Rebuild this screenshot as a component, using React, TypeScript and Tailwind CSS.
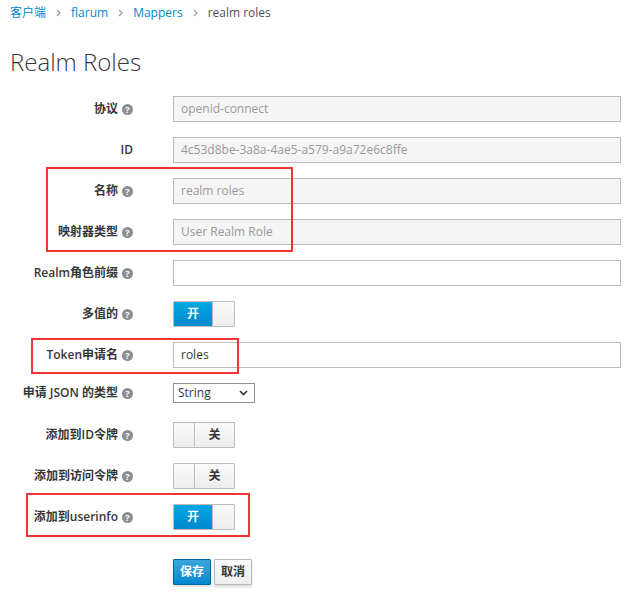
import React from "react";

const FONT = { fontFamily: '"Open Sans", "Noto Sans CJK SC", sans-serif' };

function Help() {
  return (
    <span className="inline-flex h-[11px] w-[11px] items-center justify-center rounded-full bg-[#8b8d8f] text-[9px] font-bold leading-none text-white">
      ?
    </span>
  );
}

function Chevron() {
  return (
    <svg width="5" height="8" viewBox="0 0 5 8" className="mx-[10px]">
      <path d="M1 1l3 3-3 3" fill="none" stroke="#9c9c9c" strokeWidth="1.2" />
    </svg>
  );
}

function Row({
  label,
  children,
  h = "h-[26px]",
  mb = "mb-[15px]",
}: {
  label: string;
  children: React.ReactNode;
  h?: string;
  mb?: string;
}) {
  return (
    <div className={`flex items-center ${h} ${mb}`}>
      <div className="flex w-[133px] items-center justify-end gap-[4px] text-[12px] font-semibold text-[#363636]">
        <span className="whitespace-nowrap">{label}</span>
        {label !== "ID" && <Help />}
      </div>
      <div className="ml-[40px] flex items-center">{children}</div>
    </div>
  );
}

function Input({ value, disabled }: { value: string; disabled?: boolean }) {
  return (
    <div
      className={`flex h-[26px] w-[448px] items-center border border-[#bbbbbb] pl-[7px] text-[12px] ${
        disabled ? "bg-[#f5f5f5] text-[#999999]" : "bg-white text-[#363636]"
      }`}
    >
      {value}
    </div>
  );
}

function ToggleOn() {
  return (
    <div className="flex h-[26px] w-[62px] overflow-hidden rounded-[1px] border border-[#bbbbbb]">
      <div className="flex w-[38px] items-center justify-center bg-linear-to-b from-[#00a8e1] to-[#0088ce] text-[12px] font-bold text-white">
        开
      </div>
      <div className="flex-1 border-l border-[#bbbbbb] bg-linear-to-b from-[#fafafa] to-[#ededed]" />
    </div>
  );
}

function ToggleOff() {
  return (
    <div className="flex h-[26px] w-[62px] overflow-hidden rounded-[1px] border border-[#bbbbbb]">
      <div className="w-[21px] border-r border-[#bbbbbb] bg-linear-to-b from-[#fafafa] to-[#ededed]" />
      <div className="flex flex-1 items-center justify-center bg-linear-to-b from-[#fafafa] to-[#ededed] text-[12px] font-bold text-[#363636]">
        关
      </div>
    </div>
  );
}

export default function App() {
  return (
    <div
      className="relative h-[598px] w-[632px] overflow-hidden bg-white text-[12px] text-[#363636]"
      style={FONT}
    >
      {/* breadcrumb */}
      <div className="flex h-[17px] items-center pl-[10px] pt-[4px] text-[12px] leading-[17px] box-content">
        <span className="text-[#0088ce]">客户端</span>
        <Chevron />
        <span className="text-[#0088ce]">flarum</span>
        <Chevron />
        <span className="text-[#0088ce]">Mappers</span>
        <Chevron />
        <span className="text-[#4d5258]">realm roles</span>
      </div>

      <h1 className="ml-[10px] mt-[28px] h-[26px] text-[24px] font-light leading-[26px] text-[#363636]">
        Realm Roles
      </h1>

      <div className="mt-[21px]">
        <Row label="协议">
          <Input value="openid-connect" disabled />
        </Row>
        <Row label="ID">
          <Input value="4c53d8be-3a8a-4ae5-a579-a9a72e6c8ffe" disabled />
        </Row>
        <Row label="名称">
          <Input value="realm roles" disabled />
        </Row>
        <Row label="映射器类型">
          <Input value="User Realm Role" disabled />
        </Row>
        <Row label="Realm角色前缀">
          <Input value="" />
        </Row>
        <Row label="多值的">
          <ToggleOn />
        </Row>
        <Row label="Token申请名">
          <Input value="roles" />
        </Row>
        <Row label="申请 JSON 的类型" h="h-[20px]" mb="mb-[19px]">
          <div className="flex h-[20px] w-[82px] items-center justify-between border border-[#8b8d8f] bg-white pl-[4px] pr-[6px] text-[12px] text-[#363636]">
            <span>String</span>
            <svg width="9" height="6" viewBox="0 0 9 6">
              <path d="M1 1l3.5 3.5L8 1" fill="none" stroke="#333" strokeWidth="1.6" />
            </svg>
          </div>
        </Row>
        <Row label="添加到ID令牌">
          <ToggleOff />
        </Row>
        <Row label="添加到访问令牌">
          <ToggleOff />
        </Row>
        <Row label="添加到userinfo" mb="mb-0">
          <ToggleOn />
        </Row>

        <div className="ml-[173px] mt-[29px] flex gap-[3px]">
          <button className="flex h-[26px] w-[38px] items-center justify-center rounded-[1px] border border-[#00659c] bg-linear-to-b from-[#39a5dc] to-[#0088ce] text-[12px] font-bold text-white shadow-[0_2px_3px_rgba(0,0,0,0.15)]">
            保存
          </button>
          <button className="flex h-[26px] w-[38px] items-center justify-center rounded-[1px] border border-[#bbbbbb] bg-linear-to-b from-[#fafafa] to-[#ededed] text-[12px] font-bold text-[#363636] shadow-[0_2px_3px_rgba(0,0,0,0.15)]">
            取消
          </button>
        </div>
      </div>

      {/* red annotation boxes */}
      <div className="pointer-events-none absolute left-[46px] top-[167px] h-[85px] w-[247px] border-2 border-[#f33333]" />
      <div className="pointer-events-none absolute left-[31px] top-[338px] h-[36px] w-[208px] border-2 border-[#f33333]" />
      <div className="pointer-events-none absolute left-[26px] top-[493px] h-[44px] w-[224px] border-2 border-[#f33333]" />
    </div>
  );
}
